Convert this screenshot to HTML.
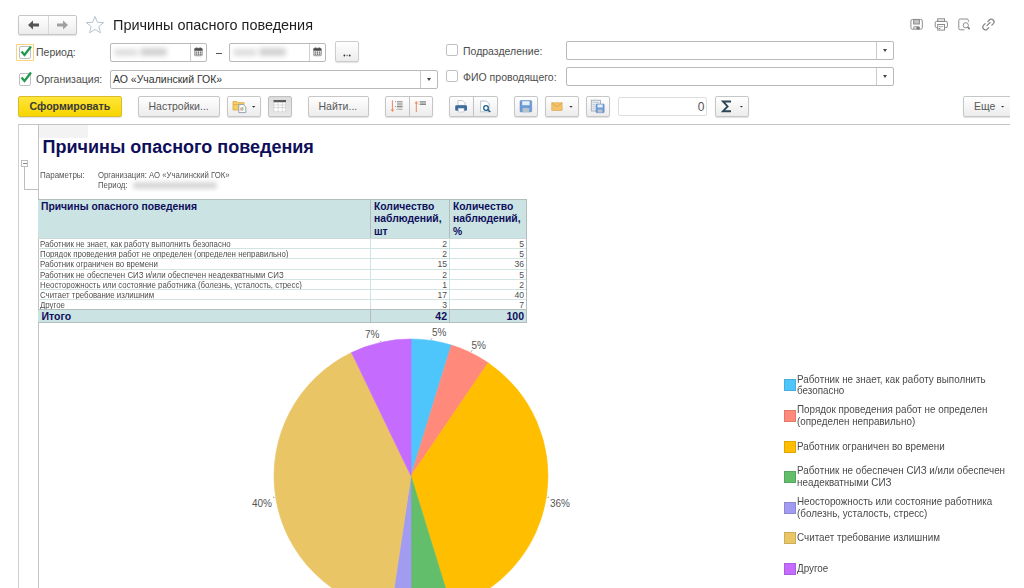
<!DOCTYPE html>
<html><head><meta charset="utf-8">
<style>
*{box-sizing:border-box}
html,body{margin:0;padding:0;width:1024px;height:588px;overflow:hidden;background:#fff;font-family:"Liberation Sans",sans-serif;color:#4d4d4d}
.a{position:absolute}
.btn{position:absolute;border:1px solid #c6c6c6;border-radius:2px;background:linear-gradient(#fff,#ececec);box-shadow:0 1px 1px rgba(0,0,0,.12);height:21px}
.inp{position:absolute;border:1px solid #b9b9b9;border-radius:2px;background:#fff}
.lbl{position:absolute;font-size:10.5px;color:#4d4d4d;white-space:nowrap;line-height:12px}
.cb{position:absolute;width:12px;height:12px;border:1px solid #c0c0c0;border-radius:2px;background:#fff}
.t{position:absolute;white-space:nowrap}
.dd{position:absolute;top:0;bottom:0;right:0;width:17px;border-left:1px solid #cccccc}
.dd:after{content:"";position:absolute;left:5.5px;top:7px;border-left:2.5px solid transparent;border-right:2.5px solid transparent;border-top:3px solid #444}
.blur{position:absolute;background:#cfcfcf;filter:blur(2.5px);border-radius:3px}
</style></head>
<body>
<!-- header -->
<div class="btn" style="left:18px;top:15px;width:59px;height:20px"></div>
<div class="a" style="left:48px;top:16px;width:1px;height:18px;background:#d8d8d8"></div>
<svg class="a" style="left:27px;top:19px" width="14" height="12" viewBox="0 0 14 12"><path d="M1 6 L6 1.5 L6 4.5 L12 4.5 L12 7.5 L6 7.5 L6 10.5 Z" fill="#555"/></svg>
<svg class="a" style="left:55px;top:19px" width="14" height="12" viewBox="0 0 14 12"><path d="M13 6 L8 1.5 L8 4.5 L2 4.5 L2 7.5 L8 7.5 L8 10.5 Z" fill="#a0a0a0"/></svg>
<svg class="a" style="left:85px;top:15px" width="20" height="20" viewBox="0 0 20 20"><path d="M10 1.5 L12.4 7.3 L18.6 7.6 L13.8 11.6 L15.4 17.8 L10 14.4 L4.6 17.8 L6.2 11.6 L1.4 7.6 L7.6 7.3 Z" fill="none" stroke="#b6c3cc" stroke-width="1"/></svg>
<div class="t" style="left:113px;top:16px;font-size:15px;color:#1e1e1e;line-height:18px;transform:scaleX(0.963);transform-origin:0 0">Причины опасного поведения</div>

<!-- top right icons -->
<svg class="a" style="left:900px;top:14px" width="110" height="20" viewBox="900 14 110 20">
<g fill="none" stroke="#8c8c8c" stroke-width="1">
<rect x="910.9" y="19.4" width="11.4" height="9.8" rx="1.6"/>
<rect x="913.6" y="19.6" width="5.8" height="4.4" fill="#c4c4c4"/>
<path d="M913.8 29.2 V26.8 H919.2 V29.2"/>
</g>
<rect x="916.4" y="27" width="3" height="2.4" fill="#777"/>
<g fill="none" stroke="#8c8c8c" stroke-width="1">
<rect x="937.7" y="18.8" width="6.8" height="2.6"/>
<rect x="935.2" y="21.3" width="12.2" height="6.4" rx="1.6"/>
<rect x="937.7" y="24.5" width="6.8" height="5.6" fill="#fff"/>
<line x1="939" y1="26.6" x2="943.2" y2="26.6" stroke="#aaa"/>
</g>
<rect x="938.8" y="28" width="1.6" height="1" fill="#777"/>
<g fill="none" stroke="#8c8c8c" stroke-width="1">
<path d="M964.5 29.8 H960.2 a1.4 1.4 0 0 1 -1.4 -1.4 V20.4 a1.4 1.4 0 0 1 1.4 -1.4 H967 a1.4 1.4 0 0 1 1.4 1.4 V21.8"/>
<circle cx="965.8" cy="25.3" r="2.6"/>
<line x1="967.8" y1="27.3" x2="969.6" y2="29.1" stroke-width="1.5" stroke="#777"/>
</g>
<g fill="none" stroke="#858585" stroke-width="1.2" stroke-linecap="round">
<path d="M987.8 21.6 L989.6 19.8 A2.7 2.7 0 0 1 993.4 23.6 L991.8 25.2"/>
<path d="M985.2 23.6 L983.4 25.4 A2.7 2.7 0 0 0 987.2 29.2 L988.8 27.6"/>
<path d="M986.9 25.7 L990.1 22.5"/>
</g>
</svg>
<!-- row 1 -->
<div class="a" style="left:16px;top:44px;width:18px;height:17px;border:1px solid #f7d67c"></div>
<div class="cb" style="left:19px;top:46px;height:13px"></div>
<svg class="a" style="left:19px;top:45px" width="14" height="13" viewBox="0 0 14 13"><path d="M2.5 6.5 L5.5 10 L12 1.5" fill="none" stroke="#1f9a4e" stroke-width="2.3"/></svg>
<div class="lbl" style="left:36px;top:46px">Период:</div>
<div class="inp" style="left:110px;top:43px;width:97px;height:19px"><div class="a" style="right:15px;top:0;bottom:0;width:1px;background:#cfcfcf"></div></div>
<div class="blur" style="left:114px;top:49px;width:24px;height:7px;background:#dedede"></div><div class="blur" style="left:140px;top:48px;width:27px;height:8px;background:#d2d2d2"></div>
<svg class="a" style="left:194px;top:47px" width="10" height="10" viewBox="0 0 10 10"><defs><linearGradient id="cg" x1="0" y1="0" x2="0" y2="1"><stop offset="0" stop-color="#fff"/><stop offset="1" stop-color="#c8c8c8"/></linearGradient></defs><rect x="0.4" y="1.2" width="8" height="7.6" rx="1.2" fill="url(#cg)" stroke="#777" stroke-width=".6"/><rect x="0.4" y="1.2" width="8" height="2.6" rx="1" fill="#4a4a4a"/><circle cx="2.6" cy="1.3" r=".9" fill="#555"/><circle cx="6.2" cy="1.3" r=".9" fill="#555"/><g fill="#4a4a4a"><rect x="1.7" y="4.6" width="1.1" height="1.1"/><rect x="3.9" y="4.6" width="1.1" height="1.1"/><rect x="6.1" y="4.6" width="1.1" height="1.1"/><rect x="1.7" y="6.6" width="1.1" height="1.1"/><rect x="3.9" y="6.6" width="1.1" height="1.1"/><rect x="6.1" y="6.6" width="1.1" height="1.1"/></g></svg>
<div class="a" style="left:215.5px;top:53px;width:6px;height:1px;background:#555"></div>
<div class="inp" style="left:229px;top:43px;width:97px;height:19px"><div class="a" style="right:15px;top:0;bottom:0;width:1px;background:#cfcfcf"></div></div>
<div class="blur" style="left:233px;top:49px;width:24px;height:7px;background:#dedede"></div><div class="blur" style="left:259px;top:48px;width:27px;height:8px;background:#d2d2d2"></div>
<svg class="a" style="left:313px;top:47px" width="10" height="10" viewBox="0 0 10 10"><defs><linearGradient id="cg" x1="0" y1="0" x2="0" y2="1"><stop offset="0" stop-color="#fff"/><stop offset="1" stop-color="#c8c8c8"/></linearGradient></defs><rect x="0.4" y="1.2" width="8" height="7.6" rx="1.2" fill="url(#cg)" stroke="#777" stroke-width=".6"/><rect x="0.4" y="1.2" width="8" height="2.6" rx="1" fill="#4a4a4a"/><circle cx="2.6" cy="1.3" r=".9" fill="#555"/><circle cx="6.2" cy="1.3" r=".9" fill="#555"/><g fill="#4a4a4a"><rect x="1.7" y="4.6" width="1.1" height="1.1"/><rect x="3.9" y="4.6" width="1.1" height="1.1"/><rect x="6.1" y="4.6" width="1.1" height="1.1"/><rect x="1.7" y="6.6" width="1.1" height="1.1"/><rect x="3.9" y="6.6" width="1.1" height="1.1"/><rect x="6.1" y="6.6" width="1.1" height="1.1"/></g></svg>
<div class="btn" style="left:335px;top:41px;width:24px;height:21px;border-color:#cdcdcd"></div><svg class="a" style="left:340px;top:52px" width="14" height="6" viewBox="340 52 14 6"><circle cx="344.4" cy="55.5" r=".9" fill="#333"/><circle cx="347.1" cy="55.5" r=".8" fill="#777"/><circle cx="349.7" cy="55.5" r=".9" fill="#333"/></svg>

<div class="cb" style="left:446px;top:44px"></div>
<div class="lbl" style="left:463px;top:45px">Подразделение:</div>
<div class="inp" style="left:566px;top:41px;width:328px;height:19px"><div class="dd"></div></div>

<!-- row 2 -->
<div class="cb" style="left:19px;top:72.5px;height:13px"></div>
<svg class="a" style="left:19px;top:71px" width="14" height="13" viewBox="0 0 14 13"><path d="M2.5 6.5 L5.5 10 L12 1.5" fill="none" stroke="#1f9a4e" stroke-width="2.3"/></svg>
<div class="lbl" style="left:36px;top:73px">Организация:</div>
<div class="inp" style="left:110px;top:70px;width:328px;height:19px"><div class="dd"></div></div>
<div class="lbl" style="left:113px;top:73px;color:#333">АО «Учалинский ГОК»</div>
<div class="cb" style="left:446px;top:70px"></div>
<div class="lbl" style="left:463px;top:71px">ФИО проводящего:</div>
<div class="inp" style="left:566px;top:67px;width:328px;height:19px"><div class="dd"></div></div>

<!-- toolbar -->
<div class="btn" style="left:18px;top:96px;width:104px;border-color:#d8bc2c;background:linear-gradient(#ffe63a,#f7d500)"><div class="t" style="left:10.5px;top:3px;font-size:10.6px;font-weight:bold;color:#3a3a3a">Сформировать</div></div>
<div class="btn" style="left:138px;top:96px;width:82px"><div class="t" style="left:9.5px;top:3px;font-size:10.5px;color:#585858">Настройки...</div></div>
<div class="btn" style="left:227px;top:96px;width:34px"></div>
<div class="btn" style="left:268px;top:96px;width:24px;background:linear-gradient(#dcdcdc,#e8e8e8);border-color:#c0c0c0"></div>
<div class="btn" style="left:308px;top:96px;width:61px"><div class="t" style="left:9.5px;top:3px;font-size:10.5px;color:#585858">Найти...</div></div>
<div class="btn" style="left:385px;top:96px;width:48px"><div class="a" style="left:23px;top:0;bottom:0;width:1px;background:#c2c2c2"></div></div>
<div class="btn" style="left:449px;top:96px;width:49px"><div class="a" style="left:23px;top:0;bottom:0;width:1px;background:#c2c2c2"></div></div>
<div class="btn" style="left:514px;top:96px;width:24px"></div>
<div class="btn" style="left:545px;top:96px;width:34px"></div>
<div class="btn" style="left:586px;top:96px;width:24px"></div>
<div class="inp" style="left:618px;top:97px;width:89px;height:19px;border-color:#dedede"><div class="t" style="right:1.5px;top:1px;font-size:12px;line-height:16px;color:#555">0</div></div>
<div class="btn" style="left:715px;top:96px;width:34px"></div>
<div class="btn" style="left:963px;top:96px;width:60px"><div class="t" style="left:10px;top:3px;font-size:10.5px;color:#585858">Еще</div></div>
<!-- TBICONS -->
<svg class="a" style="left:0;top:90px" width="1024" height="30" viewBox="0 90 1024 30">
<!-- folder+doc -->
<path d="M233 101.5 h4 l1.2 1.2 h5.8 v7.3 h-11 z" fill="#f5cf62" stroke="#d9a64a" stroke-width=".8"/>
<rect x="233" y="104" width="11" height="1" fill="#e2b04f"/>
<path d="M238.8 104.6 h4.6 l2.4 2.4 v5.6 h-7 z" fill="#fff" stroke="#8a9aa8" stroke-width=".9"/>
<rect x="240.6" y="107.6" width=".9" height="3" fill="#e04848"/><rect x="242.4" y="107" width=".9" height="3.6" fill="#4cb04c"/>
<path d="M252 106 h3.4 l-1.7 1.7 z" fill="#333"/>
<!-- grid toggle -->
<rect x="273.5" y="100" width="12.5" height="2.2" fill="#5a5a5a"/>
<rect x="273.5" y="102.2" width="12.5" height="10" fill="#d0d0d0"/>
<g fill="#fff"><rect x="274.3" y="103" width="3.4" height="1.6"/><rect x="278.5" y="103" width="3.4" height="1.6"/><rect x="282.7" y="103" width="2.6" height="1.6"/>
<rect x="274.3" y="105.4" width="3.4" height="1.6"/><rect x="278.5" y="105.4" width="3.4" height="1.6"/><rect x="282.7" y="105.4" width="2.6" height="1.6"/>
<rect x="274.3" y="107.8" width="3.4" height="3.6"/><rect x="278.5" y="107.8" width="3.4" height="3.6"/><rect x="282.7" y="107.8" width="2.6" height="3.6"/></g>
<!-- expand -->
<line x1="392.4" y1="100.3" x2="392.4" y2="110" stroke="#f0875a" stroke-width="1"/>
<path d="M390.6 109.5 h3.6 l-1.8 2.6 z" fill="#f0875a"/>
<g fill="#8a8a8a"><rect x="395.2" y="101.2" width="1" height="1"/><rect x="397" y="101.2" width="5.6" height="1"/>
<rect x="397" y="102.6" width="5.6" height="3" fill="#b8b8b8"/>
<rect x="395.2" y="106" width="1" height="1"/><rect x="397" y="106" width="5.6" height="1"/>
<rect x="397" y="107.4" width="5.6" height="1" fill="#b8b8b8"/>
<rect x="396" y="109" width="1" height="1" fill="#c8c8c8"/><rect x="397.5" y="109" width="5" height="1" fill="#b8b8b8"/></g>
<!-- collapse -->
<line x1="416.3" y1="103" x2="416.3" y2="112" stroke="#f0875a" stroke-width="1"/>
<path d="M414.5 103.6 h3.6 l-1.8 -2.6 z" fill="#f0875a"/>
<g fill="#7a7a7a"><rect x="418.6" y="101.3" width="1" height="1" fill="#aaa"/><rect x="420" y="101.3" width="6" height="1.2"/>
<rect x="420" y="102.6" width="6" height="1" fill="#b8b8b8"/>
<rect x="418.6" y="103.7" width="1" height="1" fill="#aaa"/><rect x="420" y="103.7" width="6" height="1.2"/></g>
<!-- printer -->
<path d="M458 100.6 h4.8 l2.2 2.2 v2.6 h-7 z" fill="#fff" stroke="#a8b4c0" stroke-width=".7"/>
<rect x="455.2" y="105.2" width="11.8" height="5.6" rx="1.3" fill="#3c6a9c"/>
<rect x="458.2" y="108.2" width="5.8" height="3.8" fill="#fff" stroke="#b0bcc8" stroke-width=".6"/>
<!-- preview -->
<path d="M480.6 101 h5.8 l2.8 2.8 v8 h-8.6 z" fill="#fff" stroke="#a9b5c2" stroke-width=".8"/>
<circle cx="486" cy="108" r="2.3" fill="#fff" stroke="#1d5d8a" stroke-width="1.3"/>
<line x1="487.7" y1="109.7" x2="490.4" y2="112" stroke="#1d5d8a" stroke-width="1.5"/>
<!-- floppy -->
<rect x="520" y="100.5" width="11.7" height="11.5" rx="1" fill="#6d9bd7" stroke="#5a86c0" stroke-width=".5"/>
<rect x="522.2" y="101.2" width="7.4" height="4" fill="#e6eef8"/>
<rect x="522.6" y="108" width="6.6" height="4" fill="#b9c3cc"/>
<!-- mail -->
<rect x="551.8" y="102.8" width="10.3" height="7.6" fill="#f2c368" stroke="#d9a04a" stroke-width=".6"/>
<path d="M551.8 103 l5.15 4 l5.15 -4" fill="none" stroke="#d9a04a" stroke-width=".8"/>
<path d="M569.3 106 h3.4 l-1.7 1.7 z" fill="#333"/>
<!-- copy/save -->
<rect x="591.3" y="100.2" width="9.2" height="10.8" fill="#e8ecef" stroke="#9aa4ad" stroke-width=".8"/>
<g stroke="#b8c0c8" stroke-width=".7"><line x1="592.5" y1="102.5" x2="599" y2="102.5"/><line x1="592.5" y1="104.5" x2="595" y2="104.5"/><line x1="592.5" y1="106.5" x2="595" y2="106.5"/><line x1="592.5" y1="108.5" x2="595" y2="108.5"/></g>
<rect x="596" y="104" width="8.2" height="8.7" rx=".8" fill="#6d9bd7" stroke="#5a86c0" stroke-width=".5"/>
<rect x="597.5" y="104.5" width="5.2" height="3" fill="#e6eef8"/>
<rect x="597.8" y="109.5" width="4.6" height="3" fill="#b9c3cc"/>
<!-- sigma -->
<path d="M731 101.5 H723 L727.6 106.4 L723 111.2 H731" fill="none" stroke="#2e4656" stroke-width="1.9" stroke-linejoin="miter"/>
<path d="M739.8 106 h3.2 l-1.6 1.6 z" fill="#333"/>
<!-- eshche arrow -->
<path d="M1001 106 h3.2 l-1.6 1.6 z" fill="#333"/>
</svg>
<!-- /TBICONS -->
<div class="a" style="left:1010px;top:90px;width:14px;height:40px;background:#fff"></div>

<!-- report frame -->
<div class="a" style="left:18px;top:124px;width:992px;height:1px;background:#c4c4c4"></div>
<div class="a" style="left:18px;top:124px;width:1px;height:464px;background:#cfcfcf"></div>
<div class="a" style="left:38px;top:124px;width:1px;height:464px;background:#c4c4c4"></div>

<!-- REPORT -->
<div class="a" style="left:39px;top:125px;width:49px;height:13px;background:#f3f3f3"></div>
<div class="a" style="left:21px;top:160px;width:7px;height:7px;border:1px solid #bdbdbd;background:#fff"></div>
<div class="a" style="left:22.5px;top:163px;width:4px;height:1px;background:#888"></div>
<div class="a" style="left:24px;top:167px;width:1px;height:23px;background:#bdbdbd"></div>
<div class="a" style="left:24px;top:189px;width:14px;height:1px;background:#bdbdbd"></div>
<div class="t" style="left:42.5px;top:137px;font-size:18px;font-weight:bold;color:#0e0e5a;line-height:20px">Причины опасного поведения</div>
<div class="t" style="left:40px;top:170px;font-size:8.6px;color:#555;line-height:10px;transform-origin:0 0;transform:scaleX(0.93)">Параметры:</div>
<div class="t" style="left:98px;top:170px;font-size:8.6px;color:#555;line-height:10px;transform-origin:0 0;transform:scaleX(0.902)">Организация: АО «Учалинский ГОК»</div>
<div class="t" style="left:98px;top:180px;font-size:8.6px;color:#555;line-height:10px;transform-origin:0 0;transform:scaleX(0.91)">Период:</div>
<div class="blur" style="left:133px;top:182px;width:84px;height:7px;background:#d8d8d8;filter:blur(2px)"></div>
<div class="a" style="left:38px;top:199px;width:489px;height:40px;background:#cbe3e2"></div>
<div class="t" style="left:40px;top:238.5px;font-size:8.6px;line-height:10px;color:#505050;transform:scaleX(0.915);transform-origin:0 0">Работник не знает, как работу выполнить безопасно</div>
<div class="t" style="left:370px;width:77px;text-align:right;top:238.5px;font-size:8.6px;line-height:10px;color:#505050">2</div>
<div class="t" style="left:449px;width:75px;text-align:right;top:238.5px;font-size:8.6px;line-height:10px;color:#505050">5</div>
<div class="t" style="left:40px;top:248.5px;font-size:8.6px;line-height:10px;color:#505050;transform:scaleX(0.915);transform-origin:0 0">Порядок проведения работ не определен (определен неправильно)</div>
<div class="t" style="left:370px;width:77px;text-align:right;top:248.5px;font-size:8.6px;line-height:10px;color:#505050">2</div>
<div class="t" style="left:449px;width:75px;text-align:right;top:248.5px;font-size:8.6px;line-height:10px;color:#505050">5</div>
<div class="a" style="left:38px;top:248px;width:489px;height:1px;background:#d2e3e3"></div>
<div class="t" style="left:40px;top:258.5px;font-size:8.6px;line-height:10px;color:#505050;transform:scaleX(0.915);transform-origin:0 0">Работник ограничен во времени</div>
<div class="t" style="left:370px;width:77px;text-align:right;top:258.5px;font-size:8.6px;line-height:10px;color:#505050">15</div>
<div class="t" style="left:449px;width:75px;text-align:right;top:258.5px;font-size:8.6px;line-height:10px;color:#505050">36</div>
<div class="a" style="left:38px;top:258px;width:489px;height:1px;background:#d2e3e3"></div>
<div class="t" style="left:40px;top:269.5px;font-size:8.6px;line-height:10px;color:#505050;transform:scaleX(0.915);transform-origin:0 0">Работник не обеспечен СИЗ и/или обеспечен неадекватными СИЗ</div>
<div class="t" style="left:370px;width:77px;text-align:right;top:269.5px;font-size:8.6px;line-height:10px;color:#505050">2</div>
<div class="t" style="left:449px;width:75px;text-align:right;top:269.5px;font-size:8.6px;line-height:10px;color:#505050">5</div>
<div class="a" style="left:38px;top:269px;width:489px;height:1px;background:#d2e3e3"></div>
<div class="t" style="left:40px;top:279.5px;font-size:8.6px;line-height:10px;color:#505050;transform:scaleX(0.915);transform-origin:0 0">Неосторожность или состояние работника (болезнь, усталость, стресс)</div>
<div class="t" style="left:370px;width:77px;text-align:right;top:279.5px;font-size:8.6px;line-height:10px;color:#505050">1</div>
<div class="t" style="left:449px;width:75px;text-align:right;top:279.5px;font-size:8.6px;line-height:10px;color:#505050">2</div>
<div class="a" style="left:38px;top:279px;width:489px;height:1px;background:#d2e3e3"></div>
<div class="t" style="left:40px;top:289.5px;font-size:8.6px;line-height:10px;color:#505050;transform:scaleX(0.915);transform-origin:0 0">Считает требование излишним</div>
<div class="t" style="left:370px;width:77px;text-align:right;top:289.5px;font-size:8.6px;line-height:10px;color:#505050">17</div>
<div class="t" style="left:449px;width:75px;text-align:right;top:289.5px;font-size:8.6px;line-height:10px;color:#505050">40</div>
<div class="a" style="left:38px;top:289px;width:489px;height:1px;background:#d2e3e3"></div>
<div class="t" style="left:40px;top:299.5px;font-size:8.6px;line-height:10px;color:#505050;transform:scaleX(0.915);transform-origin:0 0">Другое</div>
<div class="t" style="left:370px;width:77px;text-align:right;top:299.5px;font-size:8.6px;line-height:10px;color:#505050">3</div>
<div class="t" style="left:449px;width:75px;text-align:right;top:299.5px;font-size:8.6px;line-height:10px;color:#505050">7</div>
<div class="a" style="left:38px;top:299px;width:489px;height:1px;background:#d2e3e3"></div>
<div class="a" style="left:38px;top:309px;width:489px;height:13px;background:#cbe3e2"></div>
<div class="t" style="left:41.5px;top:309.5px;font-size:10.5px;font-weight:bold;line-height:13px;color:#0e0e5c">Итого</div>
<div class="t" style="left:370px;width:77px;text-align:right;top:309.5px;font-size:10.5px;font-weight:bold;line-height:13px;color:#0e0e5c">42</div>
<div class="t" style="left:449px;width:75px;text-align:right;top:309.5px;font-size:10.5px;font-weight:bold;line-height:13px;color:#0e0e5c">100</div>
<div class="t" style="left:41px;top:200.5px;font-size:10.35px;font-weight:bold;line-height:12.6px;color:#0e0e5c">Причины опасного поведения</div>
<div class="t" style="left:374px;top:200.5px;font-size:10.35px;font-weight:bold;line-height:12.6px;color:#0e0e5c">Количество<br>наблюдений,<br>шт</div>
<div class="t" style="left:453px;top:200.5px;font-size:10.35px;font-weight:bold;line-height:12.6px;color:#0e0e5c">Количество<br>наблюдений,<br>%</div>
<div class="a" style="left:38px;top:199px;width:489px;height:1px;background:#b3bdbd"></div>
<div class="a" style="left:38px;top:238px;width:489px;height:1px;background:#c8d8d8"></div>
<div class="a" style="left:38px;top:309px;width:489px;height:1px;background:#b3bdbd"></div>
<div class="a" style="left:38px;top:322px;width:489px;height:1px;background:#b3bdbd"></div>
<div class="a" style="left:370px;top:199px;width:1px;height:39px;background:#b3bdbd"></div>
<div class="a" style="left:370px;top:238px;width:1px;height:71px;background:#d2e3e3"></div>
<div class="a" style="left:370px;top:309px;width:1px;height:13px;background:#b3bdbd"></div>
<div class="a" style="left:449px;top:199px;width:1px;height:39px;background:#b3bdbd"></div>
<div class="a" style="left:449px;top:238px;width:1px;height:71px;background:#d2e3e3"></div>
<div class="a" style="left:449px;top:309px;width:1px;height:13px;background:#b3bdbd"></div>
<div class="a" style="left:526px;top:199px;width:1px;height:124px;background:#b3bdbd"></div>
<svg class="a" style="left:0;top:0" width="1024" height="588" viewBox="0 0 1024 588"><path d="M411 476 L411.00 339.00 A137 137 0 0 1 451.38 345.09 Z" fill="#4fc6fb" stroke="#4fc6fb" stroke-width="0.6" stroke-linejoin="round"/><path d="M411 476 L451.38 345.09 A137 137 0 0 1 488.17 362.81 Z" fill="#ff8a7b" stroke="#ff8a7b" stroke-width="0.6" stroke-linejoin="round"/><path d="M411 476 L488.17 362.81 A137 137 0 0 1 451.38 606.91 Z" fill="#ffbf00" stroke="#ffbf00" stroke-width="0.6" stroke-linejoin="round"/><path d="M411 476 L451.38 606.91 A137 137 0 0 1 411.00 613.00 Z" fill="#63be6b" stroke="#63be6b" stroke-width="0.6" stroke-linejoin="round"/><path d="M411 476 L411.00 613.00 A137 137 0 0 1 390.58 611.47 Z" fill="#a19cf1" stroke="#a19cf1" stroke-width="0.6" stroke-linejoin="round"/><path d="M411 476 L390.58 611.47 A137 137 0 0 1 351.56 352.57 Z" fill="#e9c566" stroke="#e9c566" stroke-width="0.6" stroke-linejoin="round"/><path d="M411 476 L351.56 352.57 A137 137 0 0 1 411.00 339.00 Z" fill="#c56cff" stroke="#c56cff" stroke-width="0.6" stroke-linejoin="round"/><g stroke="#9a9a9a" stroke-width="1"><line x1="380" y1="340.6" x2="381" y2="341.8"/><line x1="432" y1="338.4" x2="431" y2="339.8"/><line x1="472" y1="350.4" x2="471" y2="351.8"/><line x1="273" y1="497" x2="274.5" y2="497.5"/><line x1="547.5" y1="497.5" x2="549" y2="497"/></g><g font-family="Liberation Sans" font-size="10" fill="#555"><text x="432" y="336">5%</text><text x="471.5" y="349">5%</text><text x="365" y="338">7%</text><text x="550" y="507">36%</text><text x="272" y="507" text-anchor="end">40%</text></g></svg>
<div class="a" style="left:783.5px;top:379.3px;width:12px;height:12px;background:#4fc6fb;border:1px solid rgba(0,0,0,.12)"></div>
<div class="t" style="left:796.7px;top:373.5px;font-size:10.6px;line-height:11.8px;color:#4a4a4a;transform:scaleX(0.93);transform-origin:0 0">Работник не знает, как работу выполнить<br>безопасно</div>
<div class="a" style="left:783.5px;top:409.9px;width:12px;height:12px;background:#ff8a7b;border:1px solid rgba(0,0,0,.12)"></div>
<div class="t" style="left:796.7px;top:404.1px;font-size:10.6px;line-height:11.8px;color:#4a4a4a;transform:scaleX(0.93);transform-origin:0 0">Порядок проведения работ не определен<br>(определен неправильно)</div>
<div class="a" style="left:783.5px;top:440.5px;width:12px;height:12px;background:#ffbf00;border:1px solid rgba(0,0,0,.12)"></div>
<div class="t" style="left:796.7px;top:440.6px;font-size:10.6px;line-height:11.8px;color:#4a4a4a;transform:scaleX(0.93);transform-origin:0 0">Работник ограничен во времени</div>
<div class="a" style="left:783.5px;top:471.1px;width:12px;height:12px;background:#63be6b;border:1px solid rgba(0,0,0,.12)"></div>
<div class="t" style="left:796.7px;top:465.3px;font-size:10.6px;line-height:11.8px;color:#4a4a4a;transform:scaleX(0.93);transform-origin:0 0">Работник не обеспечен СИЗ и/или обеспечен<br>неадекватными СИЗ</div>
<div class="a" style="left:783.5px;top:501.7px;width:12px;height:12px;background:#a19cf1;border:1px solid rgba(0,0,0,.12)"></div>
<div class="t" style="left:796.7px;top:495.9px;font-size:10.6px;line-height:11.8px;color:#4a4a4a;transform:scaleX(0.93);transform-origin:0 0">Неосторожность или состояние работника<br>(болезнь, усталость, стресс)</div>
<div class="a" style="left:783.5px;top:532.3px;width:12px;height:12px;background:#e9c566;border:1px solid rgba(0,0,0,.12)"></div>
<div class="t" style="left:796.7px;top:532.4px;font-size:10.6px;line-height:11.8px;color:#4a4a4a;transform:scaleX(0.93);transform-origin:0 0">Считает требование излишним</div>
<div class="a" style="left:783.5px;top:562.9px;width:12px;height:12px;background:#c56cff;border:1px solid rgba(0,0,0,.12)"></div>
<div class="t" style="left:796.7px;top:563.0px;font-size:10.6px;line-height:11.8px;color:#4a4a4a;transform:scaleX(0.93);transform-origin:0 0">Другое</div>
<!-- /REPORT -->
</body></html>
